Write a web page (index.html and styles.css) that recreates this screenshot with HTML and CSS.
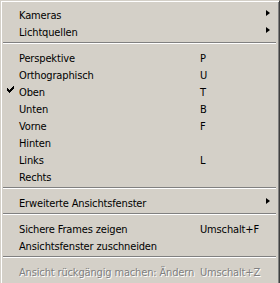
FILE: index.html
```html
<!DOCTYPE html>
<html lang="de">
<head>
<meta charset="UTF-8">
<title>Ansicht</title>
<link rel="stylesheet" href="styles.css">
</head>
<body>
<div class="menu">
  <div class="item"><span></span><span class="label">Kameras</span><span></span><span class="pfeil"></span></div>
  <div class="item"><span></span><span class="label">Lichtquellen</span><span></span><span class="pfeil"></span></div>
  <div class="trenner"></div>
  <div class="item"><span></span><span class="label">Perspektive</span><span class="kurz">P</span></div>
  <div class="item"><span></span><span class="label">Orthographisch</span><span class="kurz">U</span></div>
  <div class="item"><span class="haken"><svg width="7" height="7" viewBox="0 0 7 7"><path d="M0 2h1v1h1v1h1v-1h1v-1h1v-1h1v-1h1v3h-1v1h-1v1h-1v1h-1v1h-1v-1h-1v-1h-1v-1h-1z" fill="#000"/></svg></span><span class="label">Oben</span><span class="kurz">T</span></div>
  <div class="item"><span></span><span class="label">Unten</span><span class="kurz">B</span></div>
  <div class="item"><span></span><span class="label">Vorne</span><span class="kurz">F</span></div>
  <div class="item"><span></span><span class="label">Hinten</span><span class="kurz"></span></div>
  <div class="item"><span></span><span class="label">Links</span><span class="kurz">L</span></div>
  <div class="item"><span></span><span class="label">Rechts</span><span class="kurz"></span></div>
  <div class="trenner"></div>
  <div class="item"><span></span><span class="label">Erweiterte Ansichtsfenster</span><span></span><span class="pfeil"></span></div>
  <div class="trenner"></div>
  <div class="item"><span></span><span class="label">Sichere Frames zeigen</span><span class="kurz">Umschalt+F</span></div>
  <div class="item"><span></span><span class="label">Ansichtsfenster zuschneiden</span><span class="kurz"></span></div>
  <div class="trenner"></div>
  <div class="item aus"><span></span><span class="label">Ansicht rückgängig machen: Ändern</span><span class="kurz">Umschalt+Z</span></div>
</div>
</body>
</html>
```
FILE: styles.css
```css
html, body { margin: 0; padding: 0; background: #d4d0c8; }
body { font-family: "DejaVu Sans Condensed", "DejaVu Sans", sans-serif; font-size: 11px; letter-spacing: -0.15px; color: #000; }
.menu { width: 280px; height: 283px; box-sizing: border-box; border-top: 1px solid #d4d0c8; border-left: 1px solid #d4d0c8; border-right: 1px solid #404040; padding: 1px 1px 0 1px; box-shadow: inset 1px 1px 0 #fff, inset -1px 0 0 #808080; }
.item { display: grid; grid-template-columns: 16px 181px 65px 12px; grid-template-rows: 13px; height: 17px; box-sizing: border-box; padding-top: 4px; line-height: 17px; margin-left: 1px; white-space: nowrap; }
.item:first-child { margin-top: 1px; }
.haken svg { display: block; margin: 2px 0 0 4px; }
.pfeil { position: relative; }
.pfeil::after { content: ""; position: absolute; left: 1px; top: 3px; border-left: 4px solid #000; border-top: 3.5px solid transparent; border-bottom: 3.5px solid transparent; }
.trenner { height: 9px; box-sizing: border-box; padding-top: 5px; margin: 0 2px 0 1px; }
.trenner::before { content: ""; display: block; height: 1px; background: #808080; border-bottom: 1px solid #fff; }
.aus { color: #808080; text-shadow: 1px 1px 0 #fff; }
```
